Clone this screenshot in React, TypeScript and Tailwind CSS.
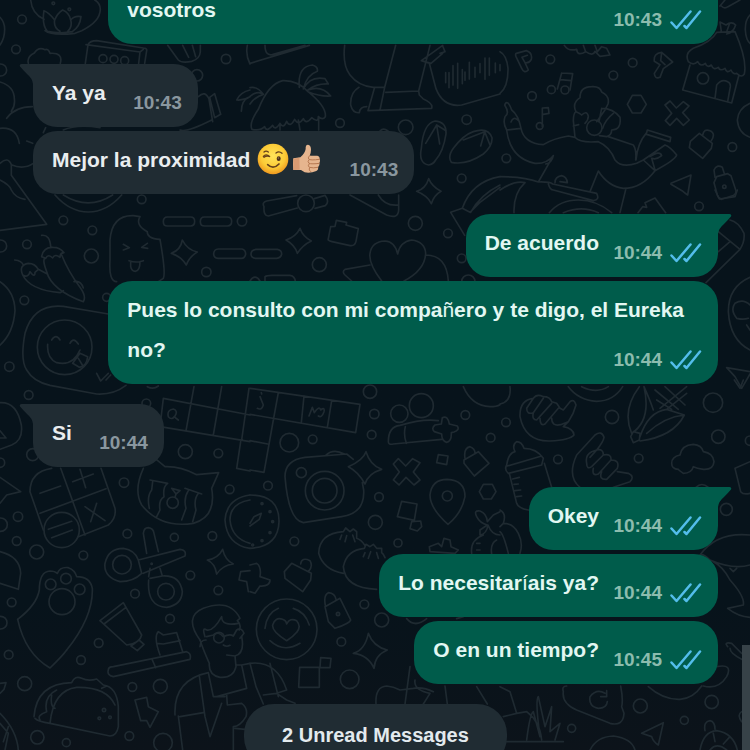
import type { ReactNode } from "react";
import { clsx } from "clsx";

type Message = {
  id: number;
  content: ReactNode;
  time: string;
  tail?: boolean;
  continued?: boolean;
};

type MessageGroup = {
  from: "me" | "them";
  messages: Message[];
};

const groups: MessageGroup[] = [
  { from: "me", messages: [{ id: 1, content: "vosotros", time: "10:43", continued: true }] },
  {
    from: "them",
    messages: [
      { id: 2, content: "Ya ya", time: "10:43", tail: true },
      {
        id: 3,
        content: (
          <>
            Mejor la proximidad <WinkEmoji />
            <ThumbEmoji />
          </>
        ),
        time: "10:43"
      }
    ]
  },
  {
    from: "me",
    messages: [
      { id: 4, content: "De acuerdo", time: "10:44", tail: true },
      {
        id: 5,
        content: (
          <>
            Pues lo consulto con mi compa<span className="font-normal">ñ</span>ero y te digo, el Eureka no?
          </>
        ),
        time: "10:44"
      }
    ]
  },
  { from: "them", messages: [{ id: 6, content: "Si", time: "10:44", tail: true }] },
  {
    from: "me",
    messages: [
      { id: 7, content: "Okey", time: "10:44", tail: true },
      {
        id: 8,
        content: (
          <>
            Lo necesitar<span className="font-normal">í</span>ais ya?
          </>
        ),
        time: "10:44"
      },
      { id: 9, content: "O en un tiempo?", time: "10:45" }
    ]
  }
];

export default function App() {
  return (
    <main className="relative isolate h-screen overflow-hidden bg-linear-to-b from-[#07131b] from-80% to-[#0c131a] font-['Liberation_Sans',Arial,sans-serif] font-bold">
      <Wallpaper />
      <div className="flex flex-col gap-5 pr-8 pl-[33px]">
        {groups.map((group) => (
          <section
            className={clsx("flex flex-col gap-1", group.from === "me" ? "items-end" : "items-start")}
            key={group.messages[0].id}
          >
            {group.messages.map((message) => (
              <Bubble key={message.id} message={message} mine={group.from === "me"} />
            ))}
          </section>
        ))}
        <div className="self-center rounded-[30px] bg-[#202c33] px-[38px] pt-[15px] pb-4 text-xl leading-8 text-[#e3eaee]">
          2 Unread Messages
        </div>
      </div>
      <div className="absolute right-0 bottom-0 h-[14%] w-2 bg-[#374248]" />
    </main>
  );
}

function Bubble({ message, mine }: { message: Message; mine: boolean }) {
  return (
    <article
      className={clsx(
        "relative grid max-w-[89%] rounded-3xl pr-4 pb-[14px] pl-[19px]",
        mine ? "bg-[#005c4b] text-[#e2f7f2]" : "bg-[#202c33] text-[#e9edef]",
        message.continued ? "-mt-[10px] w-full rounded-t-none" : "pt-[9px]",
        message.tail && (mine ? "rounded-tr-none" : "rounded-tl-none")
      )}
    >
      {message.tail ? <Tail mine={mine} /> : null}
      <p className="[grid-area:1/1] text-[21px] leading-[40px]">
        {message.content}
        <span className={clsx("inline-block", mine ? "w-[103px]" : "w-[76px]")} />
      </p>
      <div
        className={clsx(
          "flex items-center gap-2 self-end justify-self-end text-[19px] leading-5 [grid-area:1/1]",
          mine ? "text-[#8cbcae]" : "text-[#8a979f]"
        )}
      >
        <time>{message.time}</time>
        {mine ? <ReadTicks /> : null}
      </div>
    </article>
  );
}

function Tail({ mine }: { mine: boolean }) {
  return (
    <svg
      aria-hidden="true"
      className={clsx("absolute top-0 h-5 w-[15px]", mine ? "left-full -ml-px text-[#005c4b]" : "right-full -mr-px -scale-x-100 text-[#202c33]")}
      fill="currentColor"
      viewBox="0 0 15 20"
    >
      <path d="M0 0H12.500Q15 .5 14 2.500Q11 6 7 10Q1.500 14.500 1 20H0Z" />
    </svg>
  );
}

function ReadTicks() {
  return (
    <svg
      aria-label="Read"
      className="h-5 w-8"
      fill="none"
      role="img"
      stroke="#53bdeb"
      strokeLinecap="round"
      strokeLinejoin="round"
      strokeWidth="2.500"
      viewBox="0 0 32 20"
    >
      <path d="M1.500 12.500L6.500 18L20.500 1.500M14.500 16L16.500 18L30 1.500" />
    </svg>
  );
}

function WinkEmoji() {
  return (
    <svg aria-label="winking face" className="-mt-1 ml-px inline h-8 w-8" role="img" viewBox="0 0 96 96">
      <defs>
        <radialGradient cx=".5" cy=".4" id="wink-face" r=".6">
          <stop offset="0" stopColor="#ffe45a" />
          <stop offset=".65" stopColor="#fccb36" />
          <stop offset="1" stopColor="#ef981f" />
        </radialGradient>
      </defs>
      <circle cx="48" cy="48" fill="url(#wink-face)" r="46" />
      <g fill="none" stroke="#67421b" strokeLinecap="round" strokeWidth="4">
        <path d="M19 40Q27 31 39 41Q29 37 21 43" />
        <path d="M21 27Q27 22 34 27" />
        <path d="M57 30Q66 23 75 31" />
        <path d="M32 65Q49 81 66 63" strokeWidth="5" />
      </g>
      <ellipse cx="65" cy="47" fill="#4e321b" rx="6" ry="7" />
      <circle cx="64" cy="45" fill="#a3874b" r="2" />
    </svg>
  );
}

function ThumbEmoji() {
  return (
    <svg aria-label="thumbs up" className="-mt-1 ml-px inline h-8 w-8" role="img" viewBox="0 0 96 96">
      <path
        d="M10 46L31 43Q45 31 47 18Q46 5 54 5Q63 7 63 20Q63 29 59 38L82 38Q90 40 89 48Q92 55 88 61Q91 68 84 73Q86 81 79 84Q62 91 44 88L33 81L10 81Q8 63 10 46Z"
        fill="#e6b58e"
      />
      <path d="M10 47L28 44L29 80L10 81Z" fill="#d99b72" />
      <path
        d="M59 38Q53 42 56 48Q60 53 88 49M57 50Q51 56 57 61Q65 64 88 61M57 63Q52 69 58 73Q69 76 84 73M58 75Q55 82 62 86"
        fill="none"
        stroke="#b67850"
        strokeLinecap="round"
        strokeWidth="3"
      />
    </svg>
  );
}

type Doodle = {
  at: string;
  path: string;
  dots: [number, number, number][];
};

// each tile is drawn on a 3x grid
const doodles: Doodle[] = [
  {
    at: "translate(0 0) scale(.33333)",
    path: "M92 0Q96 42 132 58M135 92Q155 108 225 100L245 92Q300 66 301 28Q300 8 284 0M132 32Q125 75 142 94Q180 102 217 95Q240 80 243 50Q224 46 212 60Q208 38 188 30Q172 40 164 60Q148 38 132 32ZM164 60Q160 82 180 94M212 60Q218 80 203 94M0 52Q14 66 14 88Q14 116 0 135M85 190Q80 170 103 159Q115 140 135 149Q145 145 150 160Q190 157 181 190M256 190L264 134Q270 122 290 122L430 144Q442 145 440 152L434 190M258 134L420 156L416 190M430 148L420 156M503 136L535 180Q545 190 575 184Q600 176 601 155V136M548 136L566 172M577 136L587 170M742 136Q736 165 750 192M0 246Q42 258 43 296Q46 318 34 334M20 355Q45 320 97 320M0 385Q50 380 58 430M80 423L98 430M0 490Q24 468 34 494Q70 510 100 490M34 494V526L140 673L0 691M0 540Q30 555 34 570Q46 594 75 598M137 383L130 398M190 390Q230 372 300 383M540 390Q560 398 635 360M595 290Q615 270 627 297L638 365M629 292L644 281L662 343L644 353ZM710 300Q722 276 750 270M710 300Q730 302 750 290M724 334Q724 300 750 290M165 585Q210 636 265 636Q320 636 365 585M190 585Q265 632 338 585",
    dots: [[66, 58, 13], [48, 148, 13], [678, 177, 14], [591, 226, 17], [2, 210, 18], [309, 176, 12], [342, 178, 12], [374, 182, 12], [160, 10, 4], [208, 28, 4], [425, 598, 13], [726, 664, 14]]
  },
  {
    at: "translate(250 0) scale(.33333)",
    path: "M0 190L178 136M45 136Q45 168 67 164L165 136M6 388Q-4 370 25 328Q55 252 98 242Q142 240 174 275Q230 320 226 350Q218 362 205 350Q205 370 185 353Q168 375 160 356Q145 378 134 358Q120 385 110 364Q100 388 90 370Q75 394 68 376Q50 398 44 380Q30 394 6 388M0 263Q22 258 40 283M0 289Q24 270 40 283Q15 290 0 312M148 262Q142 200 187 195Q205 200 202 214Q170 225 160 267Q180 227 225 236L235 252Q200 250 174 270Q215 255 242 288Q210 290 174 275M90 370V390M145 360L150 390M206 350V390M284 136Q277 195 300 225Q325 258 370 262H404L437 136M374 262L354 332L545 325Q550 310 520 297L508 285L506 273L407 277M404 262L390 330M327 262Q300 278 302 315Q308 340 328 338Q330 320 350 320M506 273L540 136M514 182L552 155L578 136M514 182L538 190L558 266Q580 323 635 315L750 282M514 182L543 190L578 160M570 160L585 155L578 138M587 218V248M597 218V263M609 197V255M623 190V265M637 209V251M645 216V241M658 187V237M675 202V232M690 191V218M705 174V238M718 174V226M736 189V218M750 194V212M536 495Q505 490 514 445Q520 370 555 363Q590 365 588 402Q580 455 557 480Q550 493 536 495ZM527 430L560 375L569 432M560 375L588 392M604 487Q592 470 610 445Q640 405 670 395Q714 380 726 413Q728 438 700 462Q650 496 604 487ZM640 420L704 395L692 438M704 395L720 435M500 574Q527 566 536 536Q546 560 573 574Q552 586 544 611Q534 588 500 574ZM42 620Q35 607 50 603L140 587M142 624L55 648Q40 648 42 620M193 596L225 586Q240 605 226 617L195 625M300 585L410 645Q445 658 446 630V585M385 585Q405 620 446 615M235 716L242 680L255 679L259 661L290 667L288 675L325 686L318 724Q314 740 297 736L246 725Q232 722 235 716ZM602 637L637 625L660 637L690 607L750 562M602 637L644 706M637 625Q665 545 750 530M662 637Q690 585 750 555M390 393Q400 382 414 393",
    dots: [[270, 369, 13], [467, 382, 22], [650, 359, 14], [635, 535, 13], [496, 670, 21], [594, 700, 13], [168, 610, 25]]
  },
  {
    at: "translate(500 0) scale(.33333)",
    path: "M0 155Q20 165 24 205Q25 260 0 280M193 136Q205 155 230 148Q232 170 257 155Q280 170 285 154L300 169L330 165L320 145L305 140L292 155L285 136M257 155L250 136M49 160L79 152Q98 158 94 178Q88 190 75 188L85 210Q73 222 65 205L48 170Q45 162 49 160ZM75 188L66 172L82 166M185 219L218 221L210 270M185 219L172 267M181 239L214 242M127 324V380M127 324L145 323L147 340L130 343M463 184Q460 160 485 157L518 186L490 206L480 232Q464 238 463 220L480 194L463 184M485 157L482 182L495 194M660 18L675 0M664 18Q673 28 684 20L720 0M565 185Q553 160 580 145Q635 125 650 97L705 95Q742 180 733 222Q725 235 710 220Q700 225 693 210Q680 222 675 205Q660 215 655 202Q640 212 634 195Q622 205 616 190Q602 202 593 185Q580 198 565 185ZM570 195L548 270L695 309L716 228M645 295L650 255Q665 235 683 245Q692 248 691 260L683 305M664 95L660 66L678 75Q695 62 707 75Q700 98 680 102M688 73L680 95M750 45Q735 60 736 90Q738 120 750 130M397 286H423L439 313L423 339H397L382 313ZM495 315L510 303L529 324L550 305L567 318L548 338L568 360L550 376L530 355L510 376L496 362L515 340ZM712 360Q715 325 750 310M712 360Q715 400 750 412M571 424L598 400L637 430L634 445L608 475L568 443ZM608 405Q612 385 630 392Q648 400 634 422M642 548L650 530L683 521L693 527L708 572Q708 585 695 588L665 598Q655 595 652 585ZM645 532L642 510Q650 492 667 502L674 524M513 550L573 525L563 585Q555 580 546 572L513 553ZM15 350Q30 340 14 315Q22 295 35 330Q55 345 63 385L20 390Q8 370 15 350ZM33 366Q40 348 53 360M20 390Q30 475 105 490Q140 492 160 467L115 546M63 385Q72 430 130 434Q160 415 205 408L225 412M160 467Q155 490 137 492M225 412Q240 430 295 425Q330 440 345 480Q365 505 410 490L430 480M270 575L295 513Q325 560 370 565Q425 565 465 512M378 565L360 638M228 335Q215 310 240 293Q240 260 275 260Q300 258 305 276Q330 288 324 312L315 330L290 365M228 335Q240 340 245 345Q260 330 265 348Q265 360 255 370M228 335Q220 340 220 362L225 412M220 378L236 374M305 325Q340 325 360 352Q365 390 335 390Q335 405 320 410L298 407M305 325L297 365M340 340Q315 360 308 385M325 410L400 435Q410 450 407 480M408 480Q412 430 440 398L442 390L512 412L510 425L440 403M430 480L495 435Q510 440 530 465Q525 480 465 512L430 480M450 470Q480 450 485 467Q470 480 455 475L465 510M0 530Q75 530 115 546Q150 545 158 552L290 580Q300 600 280 602L160 570Q150 570 145 552M0 570Q45 540 75 548Q40 580 42 638M165 548Q165 530 185 527Q200 530 202 548L180 545M148 638Q180 600 235 600Q290 600 335 638M190 638Q245 615 295 638M414 638L428 620L440 622L435 608L465 594L480 615L497 638",
    dots: [[151, 178, 13], [398, 188, 13], [340, 226, 13], [96, 288, 13], [154, 269, 12], [195, 270, 12], [119, 378, 10], [609, 235, 17], [697, 441, 13], [19, 475, 13], [597, 619, 13], [283, 383, 23], [673, 560, 5]]
  },
  {
    at: "translate(0 200) scale(.33333)",
    path: "M480 118Q498 220 490 235L475 245M350 245Q326 245 330 180V120Q336 45 400 47L420 50Q405 75 442 95Q440 115 480 118M370 133L388 143L370 150M442 130L425 142L443 145M387 182Q410 190 430 182M392 184V200Q395 214 406 214Q420 212 420 185M514 160Q542 150 547 120Q562 150 592 156Q568 170 559 195Q545 170 514 160ZM502 51H572Q584 51 584 64Q584 78 572 78H502Q490 78 490 65Q490 51 502 51ZM613 51H682Q695 51 695 64Q695 78 682 78H614Q601 78 601 65Q601 51 613 51ZM655 147H726Q737 150 737 162Q735 175 724 175H654Q641 175 641 161Q642 148 655 147ZM125 106Q150 103 152 140M125 170Q130 140 160 142Q180 142 192 158Q180 158 180 172Q165 160 158 174Q145 160 137 175L125 170M137 175Q125 175 140 215Q155 270 250 305Q260 290 240 262Q205 215 185 165M44 180Q65 182 70 195M68 225Q55 195 85 190Q105 190 115 208L105 217Q105 235 90 215Q85 235 68 225Q90 270 180 278L190 272M115 208L142 222M222 245Q242 240 250 264M0 245Q44 275 45 332Q40 400 0 435M325 342L190 319Q100 310 75 400Q60 480 80 510Q100 545 150 556L290 582Q340 585 378 556M143 433Q140 475 170 488Q218 500 240 450M155 420Q168 400 180 420M210 430Q220 410 235 432M218 490L240 460L263 470Q260 500 238 502L218 490M235 475L247 495M290 520L302 543L325 520M318 540L332 525M0 608Q50 605 64 675Q70 720 35 735L0 748M0 692L18 714H0M442 560Q460 570 475 558M490 595L750 645M490 595L480 680L750 725M582 560L558 692M665 560L640 705M747 565L725 720M505 650Q500 630 520 627Q535 632 525 648Q515 662 505 650ZM522 650L535 660",
    dots: [[81, 133, 13], [274, 168, 21], [190, 61, 13], [277, 91, 13], [619, 216, 14], [73, 301, 13], [320, 292, 12], [28, 500, 14], [86, 585, 13], [439, 610, 13], [194, 442, 82], [2, 138, 18]]
  },
  {
    at: "translate(250 380) scale(.33333)",
    path: "M0 25L330 73L317 158L0 103M85 38L70 120L42 277L0 270M162 48L154 128M245 62L232 142M30 50L40 75Q35 92 22 85M34 38L35 42M0 182L53 192M177 108L187 82L193 98Q208 75 212 90Q225 80 222 95Q215 115 205 108M415 185Q415 140 450 136Q520 115 565 122M415 185Q415 195 430 192L575 178M466 140Q460 165 469 190M577 113Q593 105 598 132L622 138Q630 150 612 156L604 158Q605 185 590 187Q575 183 575 162L553 155Q543 145 555 135L574 132ZM640 20Q665 78 720 80Q740 80 750 74M165 232Q105 240 105 290Q115 420 160 428L275 410Q345 400 341 330L337 308M165 232L290 222L310 238M228 225Q250 205 283 222M295 260Q340 240 348 215Q360 255 395 268Q355 280 345 312Q325 275 295 260ZM430 252L445 236L467 258L488 236L510 248L490 276L510 300L492 315L468 292L447 315L430 300L448 276ZM565 224L594 228L590 254L560 248ZM642 240L685 215L717 250L673 288L642 250ZM645 235Q640 205 660 200Q675 205 675 220M594 433Q540 385 540 345Q545 298 592 298Q645 300 645 350Q635 400 594 433ZM455 364L501 372L493 421L442 410ZM485 425L512 423L515 440L502 453L480 446ZM700 313H727L738 335L724 357H700L688 335ZM0 345Q88 345 87 425Q85 500 0 505M0 430L12 410L34 400L28 418L0 438M206 520Q208 460 280 455L287 444L300 455L310 447L320 455V475Q335 480 345 497M206 520Q220 570 280 580M280 560Q290 510 343 505L348 493L360 500L370 493L380 505H395V518Q400 520 405 533M280 560Q285 625 380 628M275 465L270 478M290 467L285 485M308 465L315 485M345 518L340 530M362 515L355 535M380 518L385 535M0 555L20 550Q35 560 30 590L60 600Q60 620 30 618L15 640L0 635M103 575L125 550L184 580L182 600L158 635L105 595ZM152 552Q155 530 180 542Q190 560 175 575M225 680L270 655L302 720Q300 730 255 745L235 725ZM226 676Q220 645 235 638Q255 640 258 658M538 500L565 490L575 500L582 475L600 480L603 500L625 510L615 520L540 515ZM680 410Q670 390 690 393Q710 400 712 425L730 405L750 395M680 410Q690 430 712 435L690 450V465Q710 462 714 435Q725 465 750 465M700 465Q660 480 665 520M740 480Q720 490 725 522M680 490H690M680 510H690M470 716Q495 745 530 716M620 716L640 710",
    dots: [[360, 35, 20], [373, 102, 14], [365, 164, 13], [118, 188, 28], [188, 178, 13], [448, 101, 26], [514, 77, 36], [646, 105, 13], [722, 173, 13], [154, 278, 15], [224, 332, 58], [224, 332, 37], [592, 348, 15], [54, 317, 13], [387, 351, 13], [376, 427, 21], [133, 484, 13], [444, 489, 12], [343, 673, 13], [264, 702, 5], [36, 371, 3], [60, 395, 3], [68, 425, 3], [60, 458, 3], [36, 482, 3], [8, 495, 3]]
  },
  {
    at: "translate(500 380) scale(.33333)",
    path: "M0 72Q35 65 30 20M205 20Q235 60 290 64Q340 64 368 20M245 20Q290 42 325 20M60 110Q58 60 100 55Q110 40 130 50Q150 50 155 65L170 70L180 85L190 90L210 65Q222 55 228 75Q222 100 205 125L190 140Q220 145 222 165Q210 180 150 183Q75 185 60 110ZM100 55L80 85Q80 105 100 98L130 55M100 98Q95 120 110 120L155 70M120 115Q120 140 135 132L175 85M155 115Q155 140 182 134L205 125M395 160Q365 90 418 20M395 160Q455 120 432 20M420 170Q445 95 500 88L553 105Q520 170 420 183M440 160Q495 110 553 105M460 90Q450 60 432 20M480 85L560 20M500 88L560 40M470 60L515 88M465 30L535 88M495 20L555 75M400 155L420 160L418 180L400 188L392 170ZM703 0L720 25L730 0M20 255Q25 220 45 215Q35 195 50 185Q65 185 72 205Q110 205 130 235L125 255L25 280Q12 270 20 255ZM22 258L125 228M28 280L50 370Q55 385 85 390M133 250L155 322M38 297L58 292M42 313L55 312M45 332L62 330M50 350L65 348M240 322Q200 290 230 225L285 165Q305 150 312 172Q310 185 290 210L270 232M260 250Q255 225 275 215L290 210Q310 205 310 225L275 260Q260 270 260 250M310 225Q335 220 333 240L295 282Q275 290 280 265M333 240Q360 240 352 265L320 298Q295 300 305 275M352 275L385 280Q405 290 390 305L340 322M515 250Q515 230 540 225Q545 195 580 193Q605 195 610 215Q640 220 642 245Q640 270 610 268Q590 265 580 260Q575 280 550 280Q535 270 535 268Q515 268 515 250ZM588 322Q605 305 625 322M705 265L750 245M705 265L722 335Q730 345 750 340M0 390Q20 400 10 430Q40 430 55 460Q70 490 60 520M0 455Q10 460 25 520M10 430L0 440M630 540Q610 520 600 525Q650 455 750 465M630 540Q700 570 750 555M690 565L700 575L710 565M640 545Q670 560 690 600Q735 650 730 675L683 685Q715 710 750 712",
    dots: [[336, 111, 20], [639, 68, 29], [655, 170, 20], [18, 127, 13], [174, 238, 13], [416, 235, 13], [679, 388, 18], [750, 182, 14]]
  },
  {
    at: "translate(0 400) scale(.33333)",
    path: "M0 232L62 275L20 285L0 310M90 275Q90 215 155 205M90 275L130 390M120 340L318 266M182 205L255 405M303 205L345 325Q350 355 325 375L235 410M218 245L280 222M240 208L257 263M120 280L182 258M255 320L315 362M290 310L272 365M145 388L215 364M155 413L217 390M430 205Q400 270 425 315Q480 385 580 370Q650 350 635 265L656 218L590 224Q540 198 495 200L465 175M450 240L503 250Q488 260 492 290Q475 300 480 330L470 350M458 245L455 270Q440 290 448 325M555 265L605 282M565 272Q550 295 558 325L545 360M595 280Q580 300 588 330L578 365M515 265L540 272L528 282ZM528 282L525 292M710 205L722 125M710 205L750 213M750 285Q680 295 675 360Q680 435 750 445M750 300Q690 310 690 360Q695 415 750 430M440 460L430 400Q432 383 445 383Q460 385 462 400L475 455M415 480L540 448Q560 450 555 468L430 520M415 480L425 520M450 505L446 530M480 505L487 528M446 540Q440 620 500 622Q545 615 547 575Q540 525 487 528L450 535M425 520Q400 545 360 545Q310 530 315 490Q325 445 370 445Q405 450 415 480M622 480Q655 475 668 448Q675 480 700 492Q668 495 650 522Q645 490 622 480ZM750 512L722 515L717 540L740 545L745 575M0 455Q60 470 62 520L55 568L0 550M53 658Q110 615 118 570Q118 515 150 513Q165 513 172 520Q180 500 205 503Q225 510 230 530Q270 530 277 565Q280 650 200 750M600 720Q550 650 610 625Q690 595 720 655L712 662Q725 675 718 690M615 710Q605 680 620 690Q640 695 665 650Q665 680 715 670M620 710L640 705Q655 692 670 710Q690 700 700 708L710 690Q725 680 732 700L720 715",
    dots: [[98, 164, 18], [556, 155, 21], [655, 160, 13], [372, 248, 14], [689, 268, 13], [54, 350, 14], [185, 390, 53], [518, 308, 17], [50, 423, 13], [110, 456, 21], [250, 466, 13], [382, 401, 13], [523, 412, 12], [637, 408, 13], [366, 494, 28], [498, 575, 25], [455, 491, 2], [571, 526, 13], [405, 581, 13], [655, 571, 13], [152, 553, 16], [198, 536, 16], [239, 568, 16], [186, 605, 39], [35, 607, 13], [2, 374, 20], [0, 188, 14], [657, 713, 16]]
  },
  {
    at: "translate(0 600) scale(.33333)",
    path: "M53 58Q75 160 150 204Q190 165 200 150M300 62L370 8L425 105Q420 130 380 135L300 62M312 72L378 22M393 138L417 120L432 133L412 152ZM480 165Q460 110 475 95L490 105L530 98L548 155M470 130L490 132L540 122M325 210Q325 200 340 200L560 155Q575 160 570 178L340 230Q320 225 325 210ZM457 180L467 203M725 110Q735 160 705 168L680 165M705 168L708 200Q700 235 660 232Q625 225 628 190M600 120Q610 150 628 190M600 140Q600 120 618 120M670 135Q680 142 690 136M525 345Q520 240 625 218L640 290L675 290M598 228L615 350L630 410L665 310M540 350L610 338M535 348L548 450M710 195L725 195L740 265L650 290M725 195L750 190M680 285L682 315L725 310Q745 325 738 350Q720 380 700 380V450M705 385L735 388M102 350Q110 250 215 248Q225 225 245 235Q265 245 290 237L310 255Q350 260 355 320M105 355Q115 365 150 370L330 408Q350 408 355 380V320M150 370Q160 270 230 262Q320 260 345 315M170 270Q130 290 140 335Q110 345 120 360M305 265L320 258M155 285Q150 320 165 325M405 300L440 292L445 320L475 335L450 382L440 362H422ZM0 250L18 248L12 268L0 280M0 340Q50 390 55 450M0 370L25 400L15 450M25 380L10 425",
    dots: [[296, 129, 13], [510, 56, 13], [26, 164, 13], [243, 180, 13], [74, 251, 21], [397, 261, 13], [481, 259, 21], [112, 412, 20], [199, 428, 12], [388, 408, 13], [489, 428, 28], [312, 330, 5], [298, 355, 4], [330, 352, 4], [2, 68, 19]]
  },
  {
    at: "translate(250 600) scale(.33333)",
    path: "M110 122Q65 95 68 75Q75 50 98 58Q108 60 110 72Q120 52 140 62Q155 80 140 97Q130 110 110 122ZM45 85Q50 40 85 25M130 25Q165 35 178 75M60 122Q100 160 150 130M310 160Q345 150 355 100Q370 140 412 150Q375 165 372 205Q355 165 310 160ZM149 202H208V262H146ZM212 173L243 175L240 203L210 202ZM0 190Q80 180 110 270L80 280L110 300L135 310M0 190L18 260L40 312M60 190L85 290M40 285L80 280M378 312Q375 260 410 258Q430 260 450 270L490 265Q520 260 550 275M480 200L465 312M495 240Q490 270 540 280L520 312M585 258L592 312M680 260L712 312",
    dots: [[110, 88, 91], [274, 125, 13], [299, 238, 28], [395, 60, 21]]
  },
  {
    at: "translate(500 600) scale(.33333)",
    path: "M190 275Q185 258 200 258M190 275Q185 310 230 330L330 370Q370 380 372 340L365 320Q370 300 362 258M315 280Q290 265 270 290Q265 320 295 325Q320 325 322 305M320 272V290H302M445 260Q490 300 540 298Q580 295 605 258M650 200Q700 190 680 230Q655 270 610 258M683 140Q670 125 695 130L725 160M690 145Q690 160 725 178M425 400L490 368L475 435Q460 425 455 410ZM270 450Q290 410 340 408Q395 415 405 450M600 450Q610 395 650 392Q700 400 712 450M615 392Q610 365 630 362Q645 365 645 388M640 400L645 425M690 410L670 432M630 450Q650 425 680 450M20 425H190M80 420Q90 340 100 335L120 410Q105 300 115 290L135 380L155 320L150 395L180 370L165 420M0 260L30 275L50 340L80 335Q120 365 125 420M10 350L50 340M725 335Q710 345 725 365",
    dots: [[421, 318, 21], [635, 306, 20], [553, 361, 12], [215, 385, 12]]
  },
  {
    at: "translate(250 180) scale(.33333)",
    path: "M108 180Q138 170 150 145Q158 170 184 183Q158 195 142 220Q135 195 108 180ZM18 208H82Q95 210 95 222Q93 233 80 235H18Q3 235 3 222Q3 210 18 208ZM45 305V290Q50 286 65 286H120Q135 288 136 305M395 303Q355 250 360 220Q365 185 405 183Q435 185 443 222Q450 185 485 180Q525 185 527 220Q525 270 462 303M360 255L285 268Q275 275 285 285L305 303M527 225Q590 225 595 303M0 303Q15 280 30 303",
    dots: [[208, 254, 21], [635, 235, 13], [655, 305, 20]]
  },
  {
    at: "translate(650 190) scale(.33333)",
    path: "M195 0L208 27L255 20L262 0M240 90Q265 95 282 130Q285 155 270 178L168 278M205 125L270 178M205 185L240 155M300 262Q235 290 235 365Q240 450 300 480M300 345Q280 325 255 340Q240 360 260 385Q280 390 295 385M230 533L300 545M230 533L255 560L275 595L300 552M290 405L300 420",
    dots: []
  }
];

function Wallpaper() {
  return (
    <svg
      aria-hidden="true"
      className="absolute top-0 left-0 -z-10 h-[750px] w-[750px]"
      fill="none"
      stroke="#1f2a31"
      strokeLinecap="round"
      strokeLinejoin="round"
      strokeWidth="5"
      viewBox="0 0 750 750"
    >
      {doodles.map(({ at, path, dots }) => (
        <g key={at} transform={at}>
          <path d={path} />
          {dots.map(([cx, cy, r]) => (
            <circle cx={cx} cy={cy} key={`${cx}-${cy}-${r}`} r={r} />
          ))}
        </g>
      ))}
    </svg>
  );
}
